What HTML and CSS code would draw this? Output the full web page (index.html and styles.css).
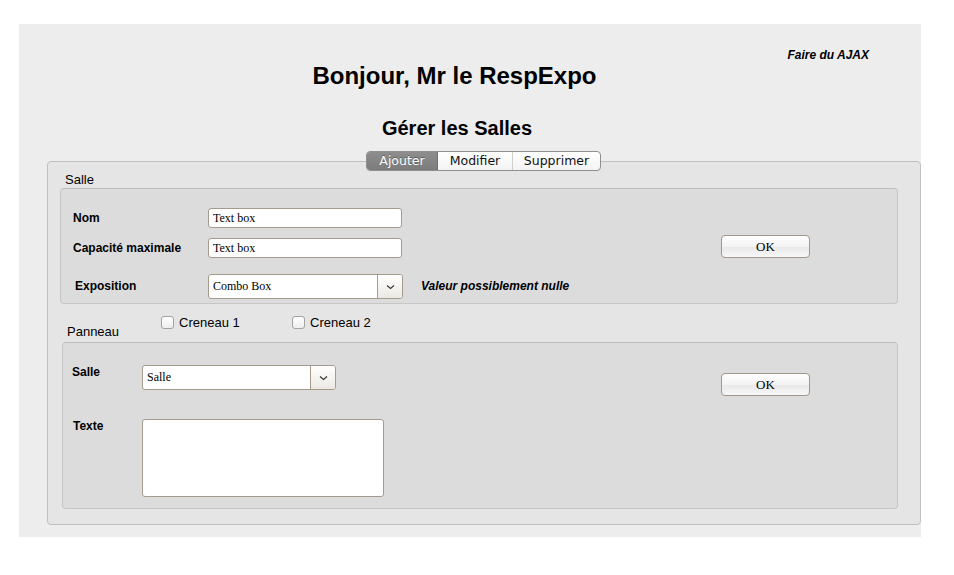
FILE: index.html
```html
<!DOCTYPE html>
<html lang="fr">
<head>
<meta charset="utf-8">
<title>Gérer les Salles</title>
<link rel="stylesheet" href="styles.css">
</head>
<body>
<div class="page">
  <div class="ajax">Faire du AJAX</div>
  <h1 class="title">Bonjour, Mr le RespExpo</h1>
  <h2 class="subtitle">Gérer les Salles</h2>
  <div class="tabpanel">
    <div class="tabs">
      <div class="tabbar">
        <span class="tab tab-ajouter active">Ajouter</span>
        <span class="tab tab-modifier">Modifier</span>
        <span class="tab tab-supprimer">Supprimer</span>
      </div>
    </div>
    <div class="legend">Salle</div>
    <div class="box box-salle">
      <label class="lbl lbl-nom">Nom</label>
      <input class="text in-nom" type="text" value="Text box">
      <label class="lbl lbl-cap">Capacité maximale</label>
      <input class="text in-cap" type="text" value="Text box">
      <label class="lbl lbl-expo">Exposition</label>
      <div class="combo combo-expo">
        <span class="combo-value">Combo Box</span>
        <span class="combo-arrow"><svg width="9" height="6" viewBox="0 0 9 6"><path d="M1 1.5 L4.5 4.5 L8 1.5" fill="none" stroke="#333" stroke-width="1.1"/></svg></span>
      </div>
      <span class="note">Valeur possiblement nulle</span>
      <button class="ok ok-salle" type="button">OK</button>
    </div>
    <div class="checkrow">
      <div class="legend legend-panneau">Panneau</div>
      <label class="check"><input type="checkbox"><span>Creneau 1</span></label>
      <label class="check"><input type="checkbox"><span>Creneau 2</span></label>
    </div>
    <div class="box box-panneau">
      <label class="lbl lbl-salle">Salle</label>
      <div class="combo combo-salle">
        <span class="combo-value">Salle</span>
        <span class="combo-arrow"><svg width="9" height="6" viewBox="0 0 9 6"><path d="M1 1.5 L4.5 4.5 L8 1.5" fill="none" stroke="#333" stroke-width="1.1"/></svg></span>
      </div>
      <button class="ok ok-panneau" type="button">OK</button>
      <label class="lbl lbl-texte">Texte</label>
      <textarea class="area"></textarea>
    </div>
  </div>
</div>
</body>
</html>
```
FILE: styles.css
```css
html, body {
  margin: 0;
  padding: 0;
  background: #ffffff;
}

body {
  font-family: "Liberation Sans", Arial, sans-serif;
  color: #000;
}

.page {
  margin: 24px 0 0 19px;
  width: 902px;
  box-sizing: border-box;
  background: #ededed;
  padding: 24px 0 12px 0;
}

.ajax {
  font-size: 12px;
  line-height: 14px;
  font-weight: bold;
  font-style: italic;
  text-align: right;
  padding-right: 52px;
}

.title {
  margin: 0;
  font-size: 24px;
  line-height: 28px;
  font-weight: bold;
  text-align: center;
  padding-right: 31px;
}

.subtitle {
  margin: 26px 0 0 0;
  font-size: 20px;
  line-height: 24px;
  font-weight: bold;
  text-align: center;
  padding-right: 26px;
}

.tabpanel {
  margin: 21px 0 0 28px;
  background: #e5e5e5;
  border: 1px solid #c0c0c0;
  border-radius: 4px;
  padding: 0 0 15px 0;
}

.tabs {
  display: flex;
  justify-content: center;
  margin-top: -11px;
  padding-right: 1px;
}

.tabbar {
  display: flex;
  height: 20px;
  box-sizing: border-box;
  border: 1px solid #8f8f8f;
  border-radius: 4px;
  overflow: hidden;
  background: linear-gradient(#ffffff, #f3f3f3);
  font-family: "DejaVu Sans", "Lucida Grande", sans-serif;
  font-size: 12.5px;
  line-height: 18px;
}

.tab {
  display: block;
  text-align: center;
  color: #111;
}

.tab-ajouter {
  width: 70px;
}

.tab-modifier {
  width: 74px;
  border-right: 1px solid #cfcfcf;
}

.tab-supprimer {
  width: 87px;
}

.tab.active {
  background: linear-gradient(#8d8d8d, #7c7c7c);
  color: #ffffff;
  text-shadow: 0 -1px 0 rgba(0, 0, 0, 0.35);
  border-right: 1px solid #6e6e6e;
}

.legend {
  font-size: 13px;
  line-height: 15px;
  margin: 1px 0 0 17px;
}

.box {
  background: #dcdcdc;
  border: 1px solid #c6c6c6;
  border-top-color: #bdbdbd;
  border-radius: 4px;
  display: grid;
}

.box-salle {
  margin: 1px 22px 0 12px;
  padding: 19px 88px 4px 12px;
  grid-template-columns: 135px 195px 1fr 88px;
  grid-template-rows: 30px 36px 25px;
  align-items: start;
}

.lbl {
  grid-column: 1;
  font-size: 12px;
  font-weight: bold;
  line-height: 20px;
}

.lbl-nom { grid-row: 1; }
.lbl-cap { grid-row: 2; }
.lbl-expo { grid-row: 3; }

.in-nom { grid-column: 2; grid-row: 1; }
.in-cap { grid-column: 2; grid-row: 2; }
.combo-expo { grid-column: 2; grid-row: 3; }

.lbl-expo {
  line-height: 25px;
  padding-left: 2px;
}

.text {
  width: 194px;
  height: 20px;
  box-sizing: border-box;
  border: 1px solid #a49b8d;
  border-radius: 3px;
  padding: 0 4px;
  margin: 0;
  font-family: "Liberation Serif", "Times New Roman", serif;
  font-size: 12px;
  color: #000;
  background: #ffffff;
  outline: none;
}

.combo {
  width: 195px;
  height: 25px;
  box-sizing: border-box;
  border: 1px solid #a49b8d;
  border-radius: 3px;
  background: #ffffff;
  display: flex;
  overflow: hidden;
  font-family: "Liberation Serif", "Times New Roman", serif;
  font-size: 12px;
}

.combo-value {
  flex: 1;
  padding-left: 4px;
  line-height: 23px;
}

.combo-arrow {
  width: 25px;
  border-left: 1px solid #a49b8d;
  background: linear-gradient(#ffffff, #ece9e3);
  display: flex;
  align-items: center;
  justify-content: center;
  padding-top: 1px;
  box-sizing: border-box;
}

.note {
  grid-column: 3;
  grid-row: 3;
  font-size: 12px;
  font-weight: bold;
  font-style: italic;
  line-height: 25px;
  padding-left: 18px;
  white-space: nowrap;
}

.ok {
  width: 89px;
  height: 23px;
  box-sizing: border-box;
  border: 1px solid #a0978a;
  border-radius: 4px;
  background: linear-gradient(#ffffff 0%, #f3f3f3 50%, #e9e9e9 55%, #f7f7f7 100%);
  font-family: "Liberation Serif", "Times New Roman", serif;
  font-size: 13px;
  color: #000;
  padding: 0;
  margin: 0;
}

.ok-salle {
  grid-column: 4;
  grid-row: 1 / 4;
  margin-top: 27px;
}

.checkrow {
  display: flex;
  align-items: flex-start;
  margin: 0;
}

.legend-panneau {
  width: 94px;
  margin: 20px 0 0 19px;
}

.check {
  display: flex;
  align-items: center;
  width: 131px;
  margin-top: 11px;
  font-size: 13px;
  line-height: 15px;
}

.check input {
  appearance: none;
  -webkit-appearance: none;
  width: 13px;
  height: 13px;
  margin: 0 5px 0 0;
  box-sizing: border-box;
  border: 1px solid #a2a2a2;
  border-radius: 3px;
  background: linear-gradient(#ffffff, #eeeeee);
}

.box-panneau {
  margin: 3px 22px 0 14px;
  padding: 22px 88px 11px 9px;
  grid-template-columns: 70px 1fr 88px;
  grid-template-rows: 54px 78px;
  align-items: start;
}

.lbl-salle { grid-row: 1; }
.lbl-texte { grid-row: 2; }

.lbl-salle,
.lbl-texte {
  line-height: 14px;
}

.lbl-texte {
  padding-left: 1px;
}

.combo-salle {
  grid-column: 2;
  grid-row: 1;
  width: 194px;
}

.ok-panneau {
  grid-column: 3;
  grid-row: 1;
  margin-top: 8px;
}

.area {
  grid-column: 2;
  grid-row: 2;
  width: 242px;
  height: 78px;
  box-sizing: border-box;
  border: 1px solid #a49b8d;
  border-radius: 3px;
  background: #ffffff;
  resize: none;
  margin: 0;
  outline: none;
}
```
